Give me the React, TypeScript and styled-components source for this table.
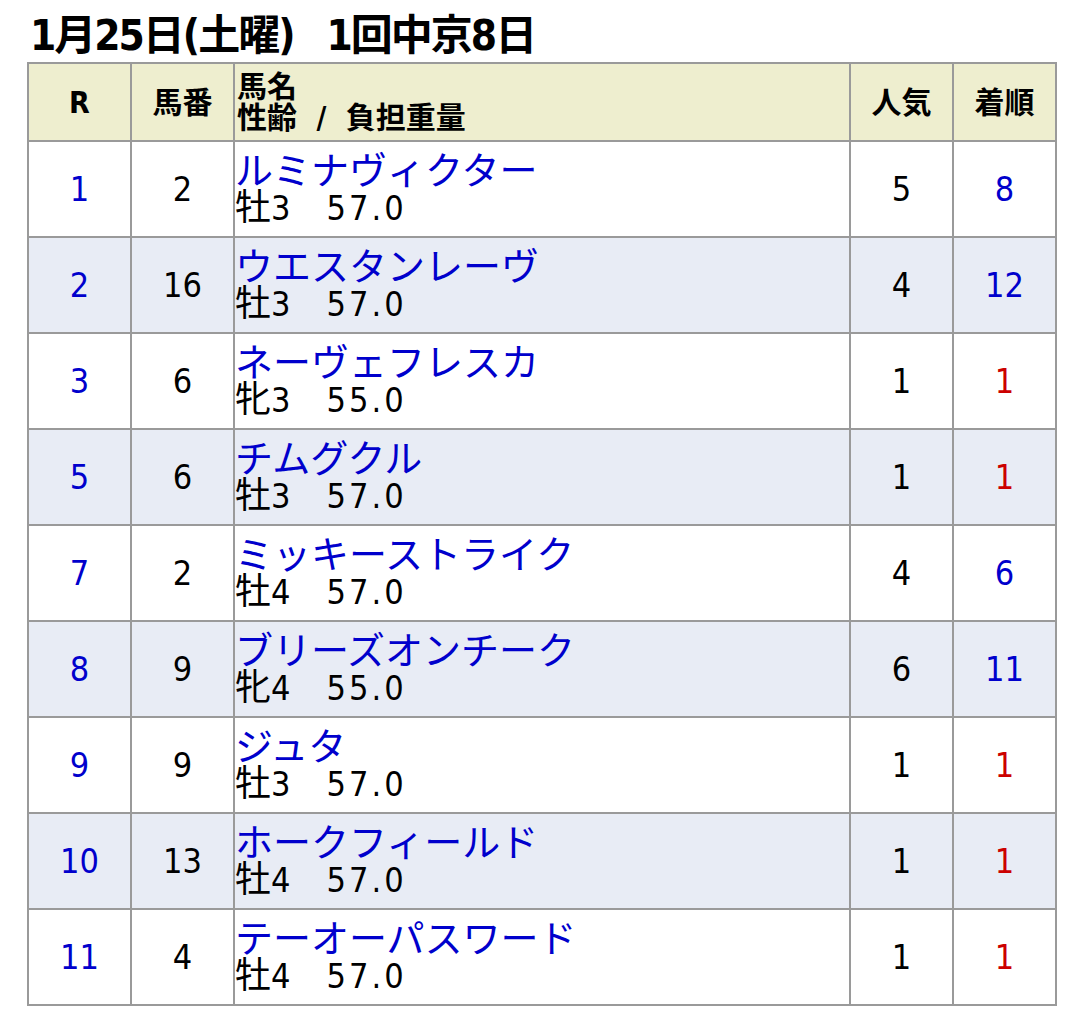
import React from 'react'
import styled, { createGlobalStyle } from 'styled-components'

const FONT = `"DejaVu Sans Condensed", "Noto Sans CJK JP", sans-serif`
const BORDER = '#9a9a9a'
const BLUE = '#0000cc'
const RED = '#cc0000'

const GlobalStyle = createGlobalStyle`
  body {
    margin: 0;
    background: #ffffff;
    font-family: ${FONT};
    color: #000;
  }
`

const Page = styled.div`
  padding: 10px 25px 0 27px;
`

const Title = styled.h1`
  margin: 0;
  padding-left: 3px;
  font-size: 42px;
  line-height: 52px;
  font-weight: 700;
  letter-spacing: -2px;
  word-spacing: 22px;
`

const Table = styled.table`
  width: 1028px;
  border-collapse: collapse;
  table-layout: fixed;
`

const HeadCell = styled.th<{ $align?: string }>`
  background: #eeeecf;
  border: 2px solid ${BORDER};
  height: 76px;
  padding: 0 2px;
  font-size: 30px;
  line-height: 31px;
  font-weight: 700;
  word-spacing: 10px;
  text-align: ${p => p.$align || 'center'};
  vertical-align: middle;
`

const Row = styled.tr<{ $alt: boolean }>`
  background: ${p => (p.$alt ? '#e8ecf5' : '#ffffff')};
`

const Cell = styled.td<{ $color?: string }>`
  border: 2px solid ${BORDER};
  height: 92px;
  padding: 0;
  text-align: center;
  vertical-align: middle;
  font-size: 34px;
  color: ${p => p.$color || '#000'};
`

const NameCell = styled.td`
  border: 2px solid ${BORDER};
  height: 92px;
  padding: 0 0 2px 0;
  vertical-align: middle;
  line-height: 40px;
`

const HorseName = styled.div`
  color: ${BLUE};
  font-family: "Noto Sans CJK JP", sans-serif;
  font-size: 38px;
`

const Sub = styled.div`
  white-space: pre;
  font-size: 36px;
`

const Num = styled.span<{ $wide?: boolean }>`
  font-size: 34px;
  letter-spacing: ${p => (p.$wide ? '3px' : '0')};
`

interface Race {
  r: number
  num: number
  name: string
  sex: string
  age: number
  weight: string
  pop: number
  place: number
}

const races: Race[] = [
  { r: 1, num: 2, name: 'ルミナヴィクター', sex: '牡', age: 3, weight: '57.0', pop: 5, place: 8 },
  { r: 2, num: 16, name: 'ウエスタンレーヴ', sex: '牡', age: 3, weight: '57.0', pop: 4, place: 12 },
  { r: 3, num: 6, name: 'ネーヴェフレスカ', sex: '牝', age: 3, weight: '55.0', pop: 1, place: 1 },
  { r: 5, num: 6, name: 'チムグクル', sex: '牡', age: 3, weight: '57.0', pop: 1, place: 1 },
  { r: 7, num: 2, name: 'ミッキーストライク', sex: '牡', age: 4, weight: '57.0', pop: 4, place: 6 },
  { r: 8, num: 9, name: 'ブリーズオンチーク', sex: '牝', age: 4, weight: '55.0', pop: 6, place: 11 },
  { r: 9, num: 9, name: 'ジュタ', sex: '牡', age: 3, weight: '57.0', pop: 1, place: 1 },
  { r: 10, num: 13, name: 'ホークフィールド', sex: '牡', age: 4, weight: '57.0', pop: 1, place: 1 },
  { r: 11, num: 4, name: 'テーオーパスワード', sex: '牡', age: 4, weight: '57.0', pop: 1, place: 1 },
]

export default function App(): JSX.Element {
  return (
    <Page>
      <GlobalStyle />
      <Title>1月25日(土曜) 1回中京8日</Title>
      <Table>
        <colgroup>
          <col style={{ width: 103 }} />
          <col style={{ width: 103 }} />
          <col style={{ width: 616 }} />
          <col style={{ width: 103 }} />
          <col style={{ width: 103 }} />
        </colgroup>
        <thead>
          <tr>
            <HeadCell>R</HeadCell>
            <HeadCell>馬番</HeadCell>
            <HeadCell $align='left'>
              馬名
              <br />
              性齢 / 負担重量
            </HeadCell>
            <HeadCell>人気</HeadCell>
            <HeadCell>着順</HeadCell>
          </tr>
        </thead>
        <tbody>
          {races.map((race, i) => (
            <Row key={race.r} $alt={i % 2 === 1}>
              <Cell $color={BLUE}>{race.r}</Cell>
              <Cell>{race.num}</Cell>
              <NameCell>
                <HorseName>{race.name}</HorseName>
                <Sub>
                  {race.sex}
                  <Num>{race.age}</Num>
                  {'　'}
                  <Num $wide>{race.weight}</Num>
                </Sub>
              </NameCell>
              <Cell>{race.pop}</Cell>
              <Cell $color={race.place === 1 ? RED : BLUE}>{race.place}</Cell>
            </Row>
          ))}
        </tbody>
      </Table>
    </Page>
  )
}
